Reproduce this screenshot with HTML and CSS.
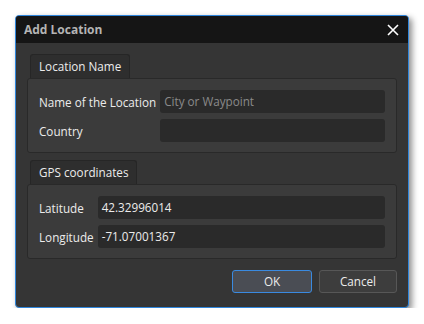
FILE: index.html
```html
<!DOCTYPE html>
<html>
<head>
    <title>Add Location</title>
    <meta charset="UTF-8">
    <link rel="stylesheet" href="styles.css">
</head>
<body>
    <div class="dialog">
        <div class="titlebar">
            <span class="title">Add Location</span>
            <svg class="close" width="12" height="12" viewBox="0 0 12 12">
                <path d="M1 1 L11 11 M11 1 L1 11" stroke="#ffffff" stroke-width="1.6" fill="none"/>
            </svg>
        </div>

        <div class="content">
            <!-- Location name group -->
            <div class="group">
                <div class="tab">Location Name</div>
                <div class="group-box">
                    <label>Name of the Location</label>
                    <div class="field placeholder">City or Waypoint</div>
                    <label>Country</label>
                    <div class="field"></div>
                </div>
            </div>

            <!-- GPS group -->
            <div class="group">
                <div class="tab">GPS coordinates</div>
                <div class="group-box">
                    <label>Latitude</label>
                    <div class="field">42.32996014</div>
                    <label>Longitude</label>
                    <div class="field">-71.07001367</div>
                </div>
            </div>

            <div class="buttons">
                <div class="btn btn-default">OK</div>
                <div class="btn">Cancel</div>
            </div>
        </div>
    </div>
</body>
</html>
```

FILE: styles.css
```css
body {
    margin: 0;
    padding: 15px 0 0 15px;
    background: #ffffff;
    font-family: "Open Sans", "Noto Sans", sans-serif;
    font-size: 11.7px;
}

.dialog {
    width: 392px;
    height: 291px;
    border: 1px solid #2f86dc;
    border-radius: 4px;
    background: #353535;
    box-shadow: 3px 3px 6px rgba(0,0,0,0.45);
    overflow: hidden;
    display: flex;
    flex-direction: column;
}

.titlebar {
    height: 27px;
    background: #151515;
    display: flex;
    align-items: center;
    justify-content: space-between;
    padding: 0 9px 0 8px;
}

.title {
    color: #b4b4b4;
    font-weight: bold;
    font-size: 12px;
}

.close {
    display: block;
}

.content {
    padding: 11px 11px 0 11px;
    display: flex;
    flex-direction: column;
}

.group {
    margin-bottom: 7px;
}

.tab {
    display: inline-block;
    margin-left: 3px;
    height: 23px;
    line-height: 23px;
    padding: 0 8px;
    background: #2e2e2e;
    border: 1px solid #262626;
    border-bottom: none;
    border-radius: 3px 3px 0 0;
    color: #ececec;
}

.group-box {
    background: #3b3b3b;
    border: 1px solid #292929;
    border-radius: 3px;
    padding: 11px 11px 10px 11px;
    display: grid;
    grid-template-columns: auto 1fr;
    column-gap: 4px;
    row-gap: 6px;
    align-items: center;
}

label {
    color: #ececec;
}

.field {
    height: 23px;
    line-height: 23px;
    padding: 0 4px;
    background: #2a2a2a;
    border-radius: 3px;
    color: #ececec;
}

.field.placeholder {
    color: #8a8a8a;
}

.buttons {
    display: flex;
    justify-content: flex-end;
    gap: 7px;
    margin-top: 4px;
}

.btn {
    width: 76px;
    height: 21px;
    line-height: 21px;
    text-align: center;
    background: #3d3d3d;
    border: 1px solid #575757;
    border-radius: 3px;
    color: #ececec;
}

.btn-default {
    width: 78px;
    background: #4a4d54;
    border-color: #3a8ae0;
}
```
